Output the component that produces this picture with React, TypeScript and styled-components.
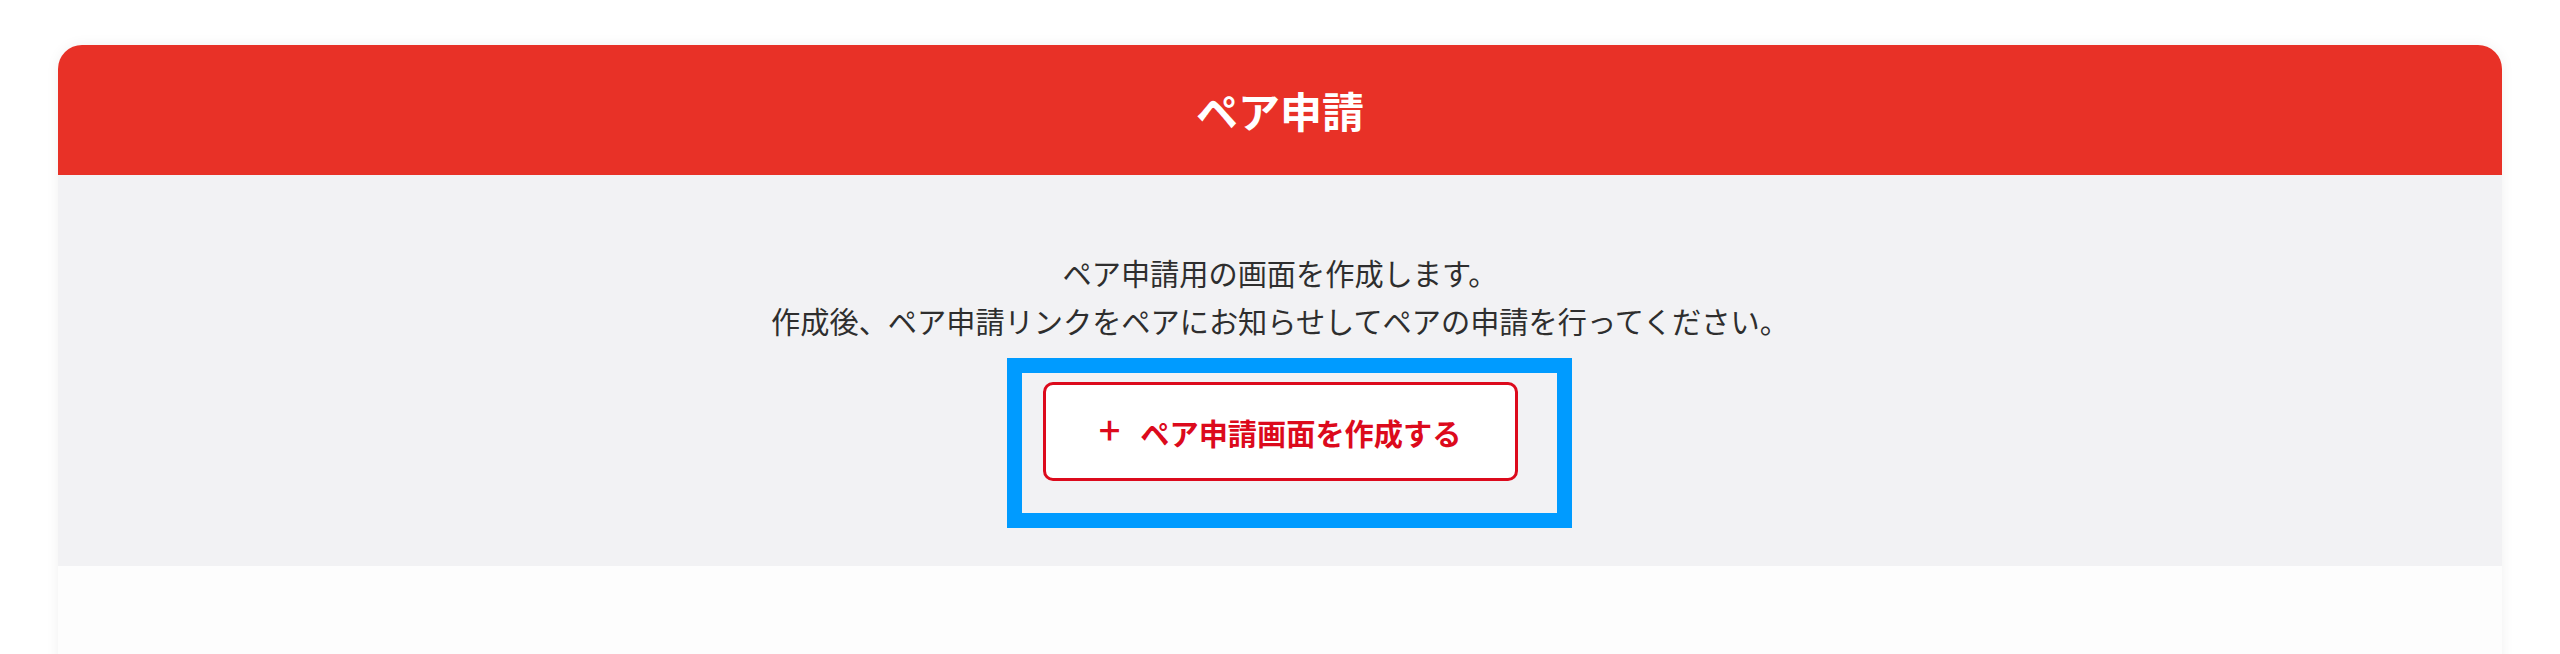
import React from 'react';
import styled, {createGlobalStyle} from 'styled-components';

const GlobalStyle = createGlobalStyle`
  body {
    margin: 0;
    background: #ffffff;
    font-family: "Noto Sans CJK JP", "Noto Sans", sans-serif;
  }
`;

const Page = styled.div`
  padding: 45px 58px 0;
  height: 654px;
  box-sizing: border-box;
  overflow: hidden;
`;

const Card = styled.section`
  display: flex;
  flex-direction: column;
  border-radius: 24px 24px 0 0;
  background: #fdfdfd;
  box-shadow: 0 0 14px rgba(0, 0, 0, 0.06);
  min-height: 700px;
  overflow: hidden;
`;

const Header = styled.header`
  display: flex;
  align-items: center;
  justify-content: center;
  height: 130px;
  background: #e83127;
`;

const Title = styled.h1`
  margin: 0;
  color: #ffffff;
  font-size: 42px;
  font-weight: 700;
  line-height: 1;
`;

const Intro = styled.div`
  display: flex;
  flex-direction: column;
  align-items: center;
  padding: 73px 0 85px;
  background: #f2f2f4;
`;

const Lead = styled.p`
  margin: 0;
  color: #2e2e2e;
  font-size: 29.2px;
  line-height: 48px;
  text-align: center;
`;

const ButtonWrap = styled.div`
  position: relative;
  margin-top: 38px;
`;

const CreateButton = styled.button`
  display: flex;
  align-items: center;
  justify-content: center;
  gap: 20px;
  width: 475px;
  height: 99px;
  box-sizing: border-box;
  border: 3px solid #dc0a1c;
  border-radius: 10px;
  background: #ffffff;
  color: #dc0a1c;
  font-family: inherit;
  font-size: 29.2px;
  font-weight: 700;
  cursor: pointer;
`;

const Plus = styled.span`
  font-weight: 500;
  font-size: 38px;
  line-height: 1;
  margin-top: -5px;
`;

// annotation frame drawn over the button
const Highlight = styled.div`
  position: absolute;
  left: -36px;
  right: -54px;
  top: -24px;
  bottom: -47px;
  border: 15px solid #009bff;
  pointer-events: none;
`;

export default function App() {
  return (
    <>
      <GlobalStyle />
      <Page>
        <Card>
          <Header>
            <Title>ペア申請</Title>
          </Header>
          <Intro>
            <Lead>ペア申請用の画面を作成します。</Lead>
            <Lead>作成後、ペア申請リンクをペアにお知らせしてペアの申請を行ってください。</Lead>
            <ButtonWrap>
              <CreateButton type="button">
                <Plus>+</Plus>
                ペア申請画面を作成する
              </CreateButton>
              <Highlight />
            </ButtonWrap>
          </Intro>
        </Card>
      </Page>
    </>
  );
}
